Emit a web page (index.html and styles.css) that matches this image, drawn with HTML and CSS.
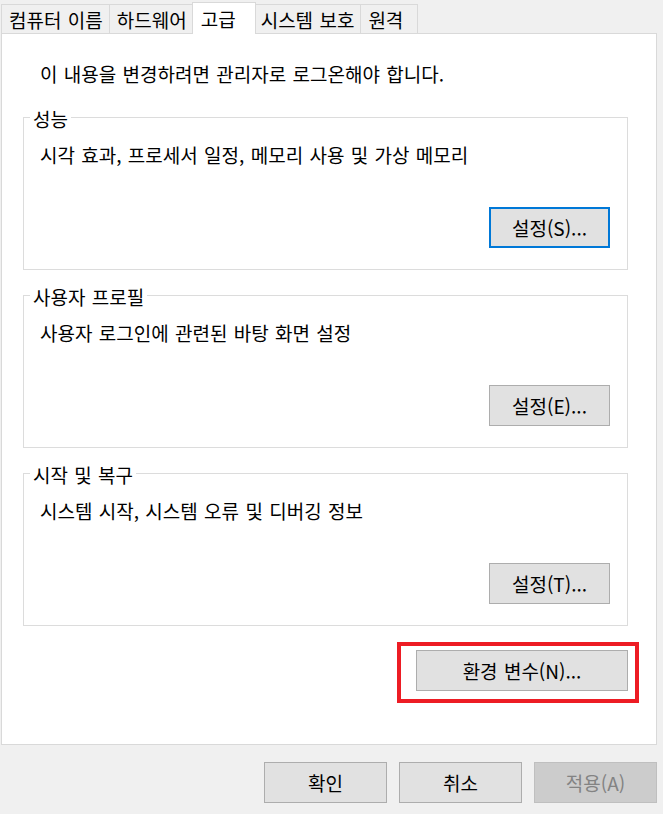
FILE: index.html
```html
<!DOCTYPE html>
<html lang="ko">
<head>
  <meta charset="UTF-8">
  <title>시스템 속성</title>
  <link rel="stylesheet" href="styles.css">
</head>
<body>
  <div class="dialog">
    <div class="tabs">
      <div class="tab">컴퓨터 이름</div>
      <div class="tab">하드웨어</div>
      <div class="tab active">고급</div>
      <div class="tab">시스템 보호</div>
      <div class="tab">원격</div>
    </div>

    <div class="panel">
      <p class="notice">이 내용을 변경하려면 관리자로 로그온해야 합니다.</p>

      <fieldset class="group">
        <legend>성능</legend>
        <p class="desc">시각 효과, 프로세서 일정, 메모리 사용 및 가상 메모리</p>
        <div class="group-actions">
          <button class="btn focused">설정(S)...</button>
        </div>
      </fieldset>

      <fieldset class="group">
        <legend>사용자 프로필</legend>
        <p class="desc">사용자 로그인에 관련된 바탕 화면 설정</p>
        <div class="group-actions">
          <button class="btn">설정(E)...</button>
        </div>
      </fieldset>

      <fieldset class="group">
        <legend>시작 및 복구</legend>
        <p class="desc">시스템 시작, 시스템 오류 및 디버깅 정보</p>
        <div class="group-actions">
          <button class="btn">설정(T)...</button>
        </div>
      </fieldset>

      <div class="env-row">
        <div class="highlight">
          <button class="btn env">환경 변수(N)...</button>
        </div>
      </div>
    </div>

    <div class="footer">
      <button class="btn wide">확인</button>
      <button class="btn wide">취소</button>
      <button class="btn wide" disabled>적용(A)</button>
    </div>
  </div>
</body>
</html>
```

FILE: styles.css
```css
body {
  margin: 0;
  background-color: #f0f0f0;
  font-family: "Noto Sans CJK KR", "Noto Sans", sans-serif;
  font-size: 19px;
  word-spacing: 1px;
  color: #000;
}

.dialog {
  padding: 0 6px 0 1px;
}

/* tab strip */
.tabs {
  display: flex;
  align-items: flex-end;
  height: 33px;
}

.tab {
  box-sizing: border-box;
  height: 29px;
  min-width: 58px;
  padding: 3px 6px 0 7px;
  line-height: 24px;
  background-color: #f0f0f0;
  border: 1px solid #d9d9d9;
  border-bottom: none;
  margin-left: -1px;
  white-space: nowrap;
}

.tab:first-child {
  margin-left: 0;
}

.tab.active {
  position: relative;
  z-index: 1;
  height: 32px;
  min-width: 64px;
  margin: 0 -2px -1px -2px;
  padding: 4px 6px 0 8px;
  background-color: #fff;
}

/* page */
.panel {
  background-color: #fff;
  border: 1px solid #d9d9d9;
  padding: 28px 28px 41px 21px;
}

.notice {
  margin: 0 0 17px 17px;
  line-height: 24px;
}

.group {
  margin: 0 0 11px 0;
  padding: 12px 17px 21px 6px;
  border: 1px solid #dcdcdc;
  min-width: 0;
}

.group legend {
  padding: 4px 3px 0 3px;
  line-height: 24px;
}

.desc {
  margin: 0 0 40px 10px;
  line-height: 24px;
}

.group-actions {
  display: flex;
  justify-content: flex-end;
}

/* buttons */
.btn {
  box-sizing: border-box;
  width: 121px;
  height: 41px;
  padding: 0;
  font-family: inherit;
  font-size: 19px;
  word-spacing: 1px;
  color: #000;
  background-color: #e1e1e1;
  border: 1px solid #adadad;
}

.btn.focused {
  border: 2px solid #0078d7;
}

.btn:disabled {
  background-color: #cccccc;
  border-color: #bfbfbf;
  color: #838383;
}

.env-row {
  display: flex;
  justify-content: flex-end;
  margin-top: 16px;
}

.highlight {
  border: 4px solid #ed1c24;
  padding: 4px 7px 8px 15px;
  margin-right: -11px;
}

.btn.env {
  display: block;
  width: 212px;
}

.footer {
  display: flex;
  justify-content: flex-end;
  gap: 12px;
  margin-top: 17px;
}

.btn.wide {
  width: 123px;
}
```
